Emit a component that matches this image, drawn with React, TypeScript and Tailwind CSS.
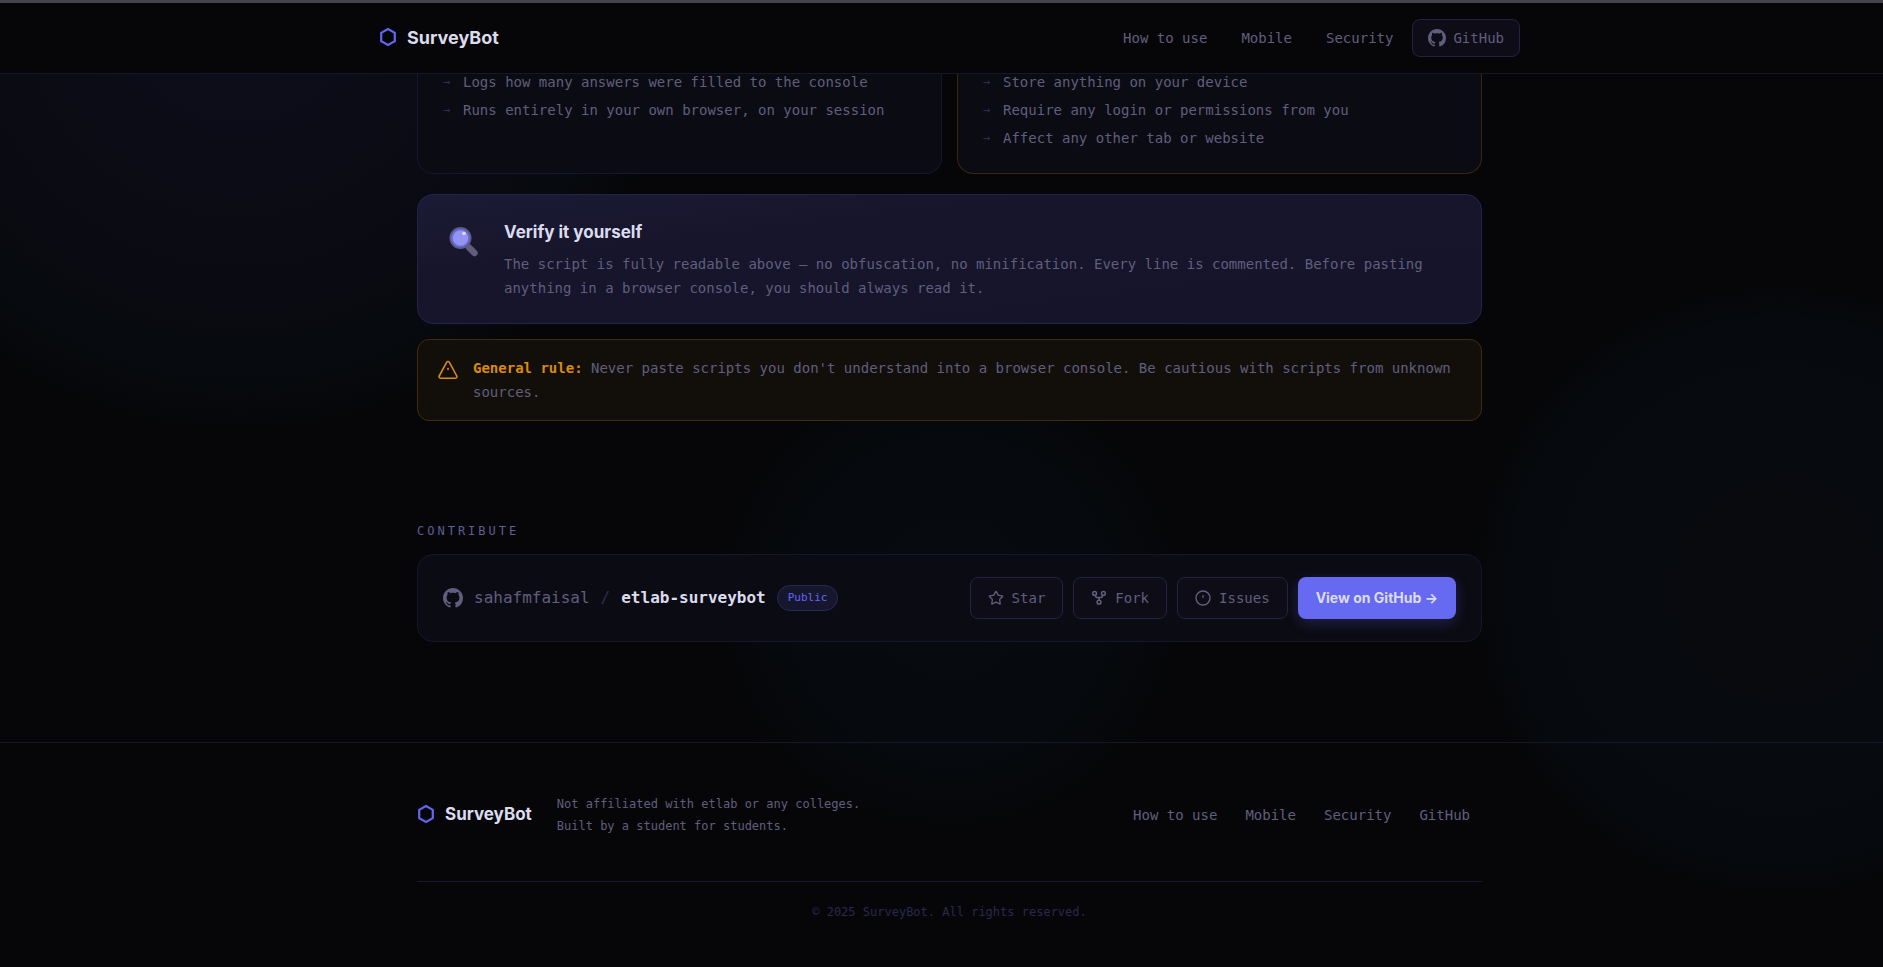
import { Star } from 'lucide-react';

const does = [
  'Logs how many answers were filled to the console',
  'Runs entirely in your own browser, on your session',
];

const doesNot = [
  'Store anything on your device',
  'Require any login or permissions from you',
  'Affect any other tab or website',
];

const actionClass =
  'flex items-center gap-2 h-[42px] px-[17px] rounded-lg border border-[#242244] bg-[#0e0d17] text-sm';

function Hexagon() {
  return (
    <svg viewBox="0 0 18 20" className="w-[18px] h-5 -mt-0.5" fill="none" stroke="#6366f1" strokeWidth="2.2" aria-hidden="true">
      <path d="M9 2 L15.8 5.8 V14.2 L9 18 L2.2 14.2 V5.8 Z" />
    </svg>
  );
}

function GithubMark({ className }: { className: string }) {
  return (
    <svg viewBox="0 0 16 16" className={className} fill="currentColor" aria-hidden="true">
      <path d="M8 0C3.58 0 0 3.58 0 8c0 3.54 2.29 6.53 5.47 7.59.4.07.55-.17.55-.38 0-.19-.01-.82-.01-1.49-2.01.37-2.53-.49-2.69-.94-.09-.23-.48-.94-.82-1.13-.28-.15-.68-.52-.01-.53.63-.01 1.08.58 1.23.82.72 1.21 1.87.87 2.33.66.07-.52.28-.87.51-1.07-1.78-.2-3.64-.89-3.64-3.95 0-.87.31-1.59.82-2.15-.08-.2-.36-1.02.08-2.12 0 0 .67-.21 2.2.82.64-.18 1.32-.27 2-.27s1.36.09 2 .27c1.53-1.04 2.2-.82 2.2-.82.44 1.1.16 1.92.08 2.12.51.56.82 1.27.82 2.15 0 3.07-1.87 3.75-3.65 3.95.29.25.54.73.54 1.48 0 1.07-.01 1.93-.01 2.2 0 .21.15.46.55.38A8.01 8.01 0 0 0 16 8c0-4.42-3.58-8-8-8z" />
    </svg>
  );
}

function Magnifier() {
  return (
    <svg viewBox="0 0 34 34" className="w-[34px] h-[34px] shrink-0" aria-hidden="true">
      <path d="M23 23.5 L28.5 29" stroke="#605d79" strokeWidth="6.5" strokeLinecap="round" />
      <circle cx="14.5" cy="14" r="10" fill="#9294f0" stroke="#605d79" strokeWidth="2" />
      <circle cx="14.5" cy="14" r="8.5" fill="none" stroke="#6366f1" strokeWidth="1.5" />
      <circle cx="18" cy="9.5" r="1.8" fill="#dcdcee" />
    </svg>
  );
}

function Warning() {
  return (
    <svg viewBox="0 0 20 20" className="w-5 h-5 mt-1 shrink-0" fill="none" stroke="#d98b0c" strokeWidth="1.6" strokeLinecap="round" strokeLinejoin="round" aria-hidden="true">
      <path d="M8.7 2.2 L1.2 16 a1.5 1.5 0 0 0 1.3 2.2 h15 a1.5 1.5 0 0 0 1.3 -2.2 L11.3 2.2 a1.5 1.5 0 0 0 -2.6 0 Z" />
      <path d="M10 8.5 v1" />
    </svg>
  );
}

function ForkIcon() {
  return (
    <svg viewBox="0 0 16 16" className="w-4 h-4" fill="none" stroke="currentColor" strokeWidth="1.5" aria-hidden="true">
      <circle cx="3.6" cy="3.4" r="1.9" />
      <circle cx="12.4" cy="3.4" r="1.9" />
      <circle cx="8" cy="12.2" r="1.9" />
      <path d="M4.2 5.3 C4.6 7.2 5.4 7.6 6.6 7.6 h2.8 C10.6 7.6 11.4 7.2 11.8 5.3 M8 7.6 v2.7" />
    </svg>
  );
}

function IssueIcon() {
  return (
    <svg viewBox="0 0 16 16" className="w-4 h-4" fill="none" stroke="currentColor" strokeWidth="1.4" strokeLinecap="round" aria-hidden="true">
      <circle cx="8" cy="8" r="7" />
      <path d="M8 5.8 v1.4" />
    </svg>
  );
}

function List({ items }: { items: string[] }) {
  return (
    <ul className="flex flex-col gap-3">
      {items.map((item) => (
        <li key={item} className="flex gap-3 text-sm leading-4">
          <span className="w-2 text-xs leading-4 text-[#2f2c55]">→</span>
          {item}
        </li>
      ))}
    </ul>
  );
}

export default function App() {
  return (
    <div className="min-h-screen bg-[#060608] bg-[radial-gradient(circle_440px_at_240px_0px,#0f0e1e_0%,#0b0b14_50%,#070a0e_85%,transparent_100%),radial-gradient(circle_310px_at_1780px_590px,#090a0e_0%,#060a0e_85%,transparent_100%),radial-gradient(circle_240px_at_950px_600px,#070b10_0%,#060a0e_60%,transparent_100%)] font-['DejaVu_Sans_Mono',monospace] text-[#605e7e]">
      <header className="border-t-[3px] border-t-[#43434f] border-b border-b-[#17162c] bg-[#060608] pl-4">
        <div className="mx-auto flex h-[70px] max-w-[1141px] items-center justify-between">
          <a href="#" className="flex items-center gap-2.5 font-['Inter',sans-serif] text-lg font-bold text-[#dcdcee]">
            <Hexagon />
            SurveyBot
          </a>
          <nav className="flex items-center gap-1 text-sm">
            <a href="#how" className="px-[15px]">How to use</a>
            <a href="#mobile" className="px-[15px]">Mobile</a>
            <a href="#security" className="px-[15px]">Security</a>
            <a href="#github" className="flex h-[38px] items-center gap-[7px] rounded-lg border border-[#242244] bg-[#0e0d17] px-[15px]">
              <GithubMark className="w-[18px] h-[18px]" />
              GitHub
            </a>
          </nav>
        </div>
      </header>

      <main className="pl-4">
        <div className="mx-auto max-w-[1065px]">
          <section id="security">
            <div className="grid grid-cols-2 gap-[15px]">
              <div className="rounded-b-2xl border border-t-0 border-[#16152f] bg-[#0b0b13] px-[25px] pb-[27px]">
                <List items={does} />
              </div>
              <div className="rounded-b-2xl border border-t-0 border-[#3c2510] bg-[#0b0b13] px-[25px] pb-[27px]">
                <List items={doesNot} />
              </div>
            </div>

            <div className="mt-5 flex gap-6 rounded-2xl border border-[#25234a] bg-linear-to-br from-[#1c1b36] via-[#16152b] via-30% to-[#15142a] px-7 pt-[25px] pb-[23px]">
              <div className="pt-1">
                <Magnifier />
              </div>
              <div>
                <h3 className="font-['Inter',sans-serif] text-[17px] leading-6 font-bold text-[#dcdcee]">Verify it yourself</h3>
                <p className="mt-2 text-sm leading-6">
                  The script is fully readable above — no obfuscation, no minification. Every line is commented. Before pasting anything in a browser console, you should always read it.
                </p>
              </div>
            </div>

            <div className="mt-[15px] flex gap-[15px] rounded-xl border border-[#43290f] bg-[#120f0b] px-5 py-4">
              <Warning />
              <p className="text-sm leading-6">
                <strong className="text-[#d98b0c]">General rule:</strong> Never paste scripts you don't understand into a browser console. Be cautious with scripts from unknown sources.
              </p>
            </div>
          </section>

          <section className="pt-[102px] pb-[100px]">
            <h2 className="text-xs leading-4 tracking-[3px] text-[#605e95]">CONTRIBUTE</h2>
            <div className="mt-[15px] flex items-center justify-between rounded-2xl border border-[#16152f] bg-[#0b0b13] px-[25px] py-[22px]">
              <div className="flex items-center gap-[11px]">
                <GithubMark className="w-5 h-5" />
                <span>sahafmfaisal</span>
                <span className="text-[#2f2c55]">/</span>
                <strong className="text-[#dcdcee]">etlab-surveybot</strong>
                <span className="rounded-full border border-[#2a2850] bg-[#17162f] px-2.5 py-1 text-[11px] leading-4 text-[#6366f1]">Public</span>
              </div>
              <div className="flex items-center gap-2.5">
                <a href="#star" className={actionClass}>
                  <Star className="w-4 h-4" />
                  Star
                </a>
                <a href="#fork" className={actionClass}>
                  <ForkIcon />
                  Fork
                </a>
                <a href="#issues" className={actionClass}>
                  <IssueIcon />
                  Issues
                </a>
                <a href="#github" className="flex h-[42px] items-center rounded-lg bg-[#656af0] px-[18px] font-['Inter',sans-serif] text-sm font-bold text-[#dcdcee] shadow-[0_4px_14px_#6366f140]">
                  View on GitHub →
                </a>
              </div>
            </div>
          </section>
        </div>
      </main>

      <footer className="border-t border-[#17162c] pl-4">
        <div className="mx-auto max-w-[1065px]">
          <div className="flex items-center justify-between pt-[50px] pb-11">
            <div className="flex items-center gap-[25px]">
              <a href="#" className="flex items-center gap-2.5 font-['Inter',sans-serif] text-[17px] font-bold text-[#dcdcee]">
                <Hexagon />
                SurveyBot
              </a>
              <p className="text-xs leading-[22px]">
                Not affiliated with etlab or any colleges.
                <br />
                Built by a student for students.
              </p>
            </div>
            <nav className="flex gap-1 text-sm">
              <a href="#how" className="px-3">How to use</a>
              <a href="#mobile" className="px-3">Mobile</a>
              <a href="#security" className="px-3">Security</a>
              <a href="#github" className="px-3">GitHub</a>
            </nav>
          </div>
          <p className="border-t border-[#19173a] pt-[22px] pb-10 text-center text-xs leading-4 text-[#2a2850]">© 2025 SurveyBot. All rights reserved.</p>
        </div>
      </footer>
    </div>
  );
}
